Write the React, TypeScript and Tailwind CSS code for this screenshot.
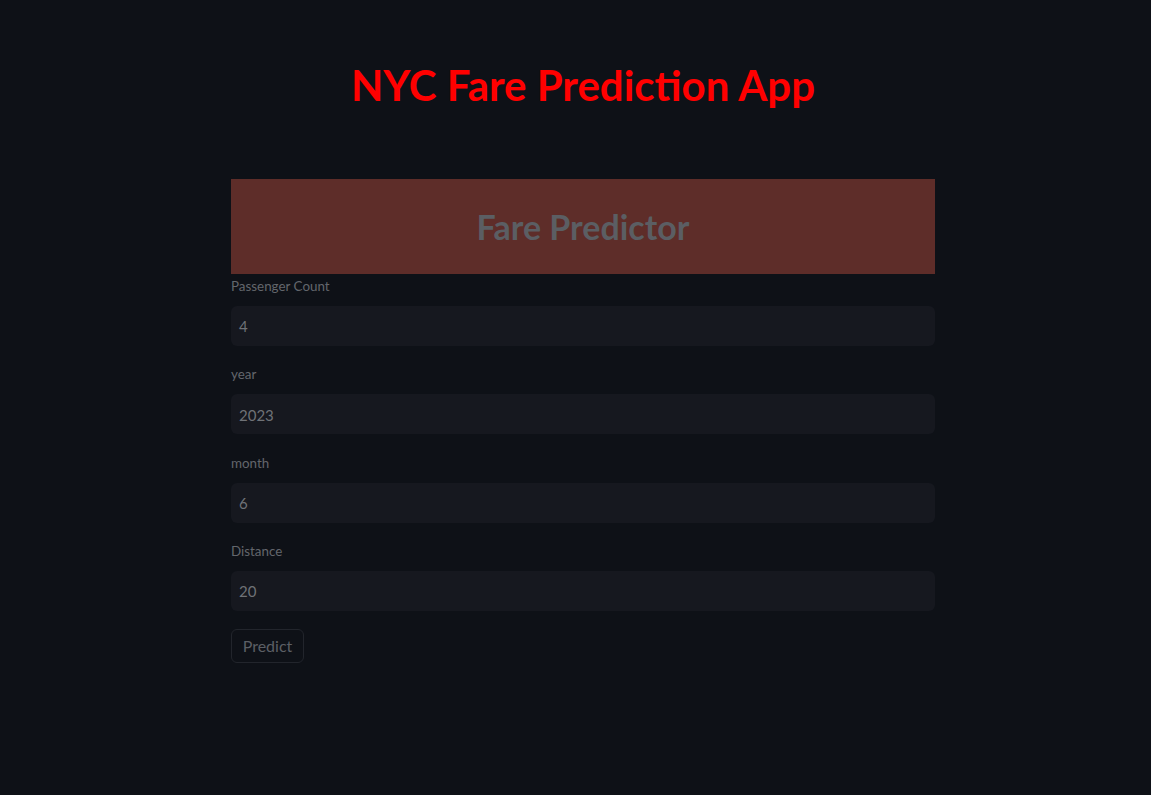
import React from "react";

const fields = [
  { label: "Passenger Count", value: "4" },
  { label: "year", value: "2023" },
  { label: "month", value: "6" },
  { label: "Distance", value: "20" },
];

export default function App() {
  return (
    <div
      className="min-h-[795px] w-full bg-[#0e1117] flex flex-col items-center pl-[15px]"
      style={{ fontFamily: "Lato, 'Noto Sans', sans-serif" }}
    >
      <h1 className="mt-[60px] h-[50px] flex items-center text-[42px] font-bold text-[#ff0000] leading-none">
        NYC Fare Prediction App
      </h1>
      <div className="mt-[69px] w-[704px] flex flex-col">
        <div className="h-[95px] bg-[#5e2d29] flex items-center justify-center">
          <h2 className="text-[34px] font-bold text-[#5b5e63] leading-none">Fare Predictor</h2>
        </div>
        {fields.map((f, i) => (
          <div key={f.label} className={i === 0 ? "mt-[3px]" : "mt-[19.4px]"}>
            <div className="h-[18px] text-[13.4px] leading-[18px] text-[#63666c]">{f.label}</div>
            <div className="mt-[11px] h-[40px] rounded-[6px] bg-[#16181f] flex items-center px-[8px] pt-[1px] text-[15px] text-[#6f7277]">
              {f.value}
            </div>
          </div>
        ))}
        <div className="mt-[18px]">
          <button className="h-[34px] w-[73px] rounded-[6px] border border-[#22252c] bg-[#0e1117] text-[16px] text-[#5c5f65]">
            Predict
          </button>
        </div>
      </div>
    </div>
  );
}
